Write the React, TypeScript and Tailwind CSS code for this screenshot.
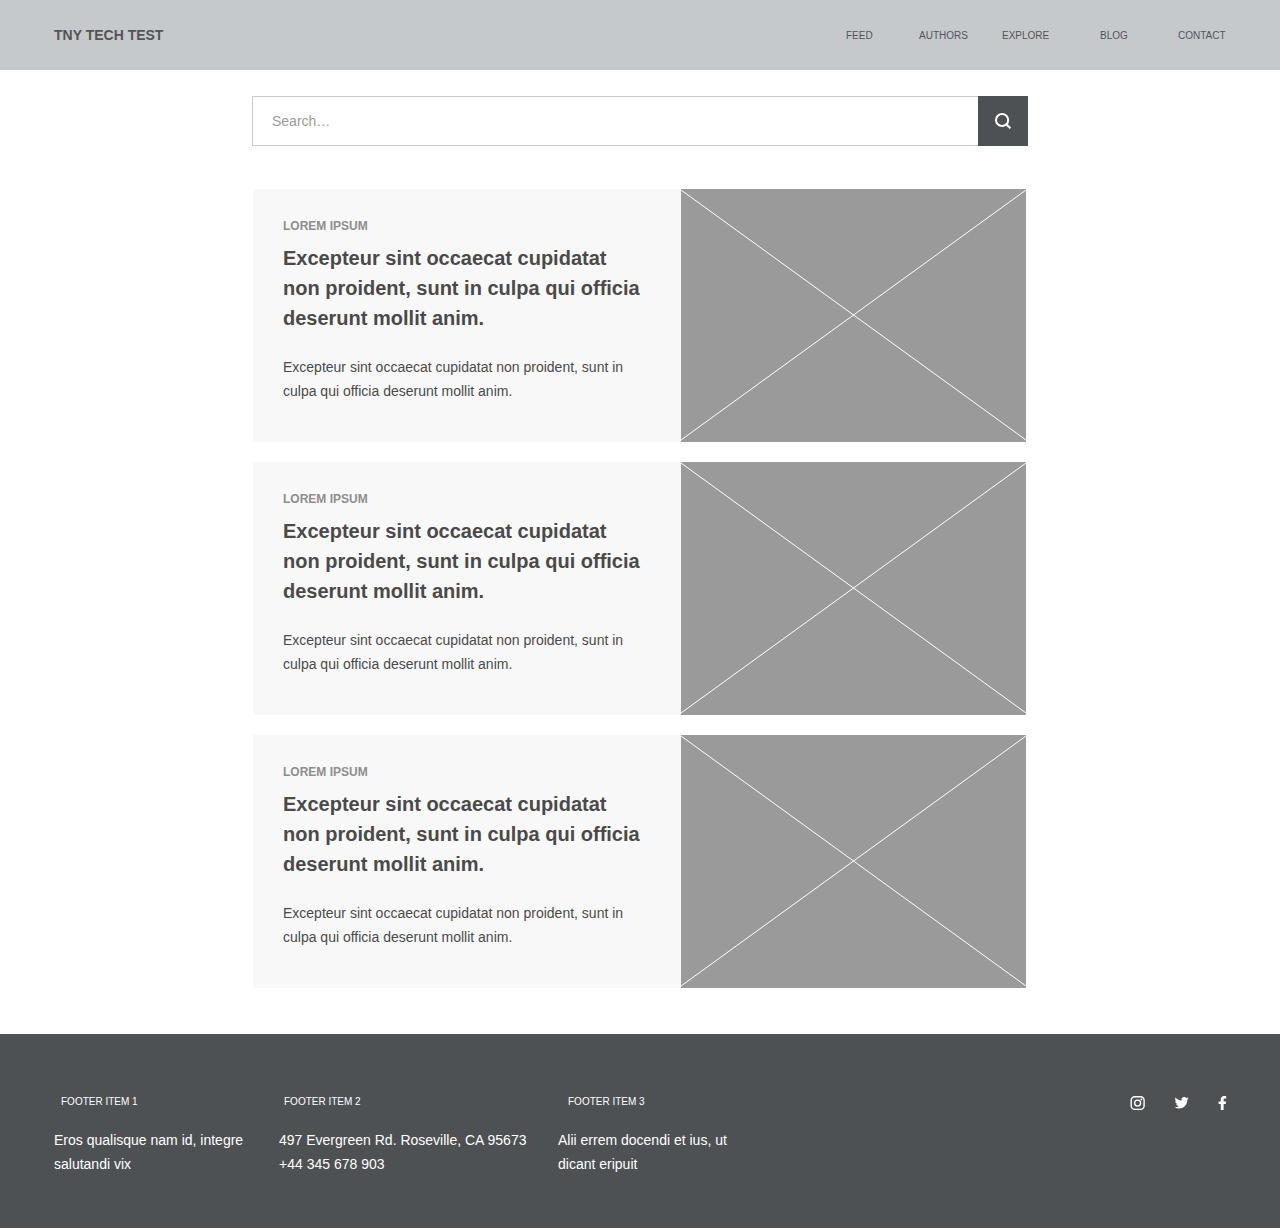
import React from "react";

const nav = [
  { label: "FEED", width: "w-[73px]" },
  { label: "AUTHORS", width: "w-[83px]" },
  { label: "EXPLORE", width: "w-[98px]" },
  { label: "BLOG", width: "w-[78px]" },
  { label: "CONTACT", width: "w-[102px]" },
];

function Card() {
  return (
    <article className="flex h-[253px] w-[773px] bg-[#f8f8f8]">
      <div className="w-[428px] pl-[30px] pt-7">
        <p className="whitespace-nowrap text-xs leading-[18px] font-bold text-[#8e8e8e]">LOREM IPSUM</p>
        <h2 className="mt-2 whitespace-nowrap text-[20px] leading-[30px] font-bold text-[#4a4a4a]">
          Excepteur sint occaecat cupidatat
          <br />
          non proident, sunt in culpa qui officia
          <br />
          deserunt mollit anim.
        </h2>
        <p className="mt-[22px] whitespace-nowrap text-sm leading-6 text-[#4a4a4a]">
          Excepteur sint occaecat cupidatat non proident, sunt in
          <br />
          culpa qui officia deserunt mollit anim.
        </p>
      </div>
      <svg className="h-[253px] w-[345px] bg-[#9a9a9a]" viewBox="0 0 345 253" fill="none" stroke="#fff" strokeWidth="1">
        <path d="M0 1L345 251M0 251L345 1" />
      </svg>
    </article>
  );
}

export default function App() {
  return (
    <div className="flex h-[1228px] w-[1280px] flex-col overflow-hidden bg-white font-['Liberation_Sans',Arial,sans-serif]">
      <header className="flex h-[70px] shrink-0 items-center bg-[#c6c9cc] pl-[54px]">
        <div className="w-[792px] text-sm font-bold text-[#545454]">TNY TECH TEST</div>
        <nav className="flex pt-px text-[10px] leading-4 text-[#545454]">
          {nav.map((n) => (
            <a key={n.label} className={n.width}>{n.label}</a>
          ))}
        </nav>
      </header>
      <main className="flex h-[964px] shrink-0 flex-col pl-[252px] pt-[26px]">
        <form className="flex h-[50px] w-[776px]">
          <div className="flex w-[726px] items-center border border-r-0 border-[#c8c8c8] pl-[19px] text-sm text-[#9b9b9b]">Search…</div>
          <button type="button" className="flex w-[50px] items-center justify-center bg-[#4d5154]">
            <svg width="18" height="18" viewBox="0 0 18 18" fill="none" stroke="#fff" strokeWidth="2">
              <circle cx="8.1" cy="8" r="6.1" />
              <path d="M12 12L16.4 16.2" strokeWidth="2.2" />
            </svg>
          </button>
        </form>
        <section className="mt-[43px] ml-px flex flex-col gap-5">
          <Card />
          <Card />
          <Card />
        </section>
      </main>
      <footer className="flex h-[194px] shrink-0 bg-[#4d5154] pl-[54px] pt-[60px] text-white">
        <div className="w-[225px] whitespace-nowrap">
          <h3 className="pl-[7px] text-[10px] leading-4">FOOTER ITEM 1</h3>
          <p className="mt-[18px] text-sm leading-6">Eros qualisque nam id, integre<br />salutandi vix</p>
        </div>
        <div className="w-[279px] whitespace-nowrap">
          <h3 className="pl-[5px] text-[10px] leading-4">FOOTER ITEM 2</h3>
          <p className="mt-[18px] text-sm leading-6">497 Evergreen Rd. Roseville, CA 95673<br />+44 345 678 903</p>
        </div>
        <div className="w-[572px] whitespace-nowrap">
          <h3 className="pl-[10px] text-[10px] leading-4">FOOTER ITEM 3</h3>
          <p className="mt-[18px] text-sm leading-6">Alii errem docendi et ius, ut<br />dicant eripuit</p>
        </div>
        <div className="flex h-[18px] items-center">
          <svg className="mr-[29px]" width="15" height="18" viewBox="0 0 15 18" fill="none" stroke="#fff" strokeWidth="1.4">
            <rect x="1.2" y="2.7" width="12.9" height="12.7" rx="3.6" />
            <circle cx="7.6" cy="9.1" r="3" />
            <circle cx="11.4" cy="5.4" r="0.9" fill="#fff" stroke="none" />
          </svg>
          <svg className="mr-[29px]" width="15" height="15" viewBox="-1 0.6 25.5 25.5" fill="#fff">
            <path d="M23.953 4.57a10 10 0 01-2.825.775 4.958 4.958 0 002.163-2.723c-.951.555-2.005.959-3.127 1.184a4.92 4.92 0 00-8.384 4.482C7.69 8.095 4.067 6.13 1.64 3.162a4.822 4.822 0 00-.666 2.475c0 1.71.87 3.213 2.188 4.096a4.904 4.904 0 01-2.228-.616v.06a4.923 4.923 0 003.946 4.827 4.996 4.996 0 01-2.212.085 4.936 4.936 0 004.604 3.417 9.867 9.867 0 01-6.102 2.105c-.39 0-.779-.023-1.17-.067a13.995 13.995 0 007.557 2.209c9.053 0 13.998-7.496 13.998-13.985 0-.21 0-.42-.015-.63A9.935 9.935 0 0024 4.59z" />
          </svg>
          <svg width="9" height="18" viewBox="0 0 9 18" fill="#fff">
            <path d="M2.8 16.1V9.9H0.6V7.4H2.8V5.5C2.8 3.3 4 2.1 6 2.1C6.9 2.1 7.7 2.1 8.2 2.2V4.4H6.9C5.9 4.4 5.6 4.9 5.6 5.7V7.4H8.1L7.7 9.9H5.6V16.1Z" />
          </svg>
        </div>
      </footer>
    </div>
  );
}
